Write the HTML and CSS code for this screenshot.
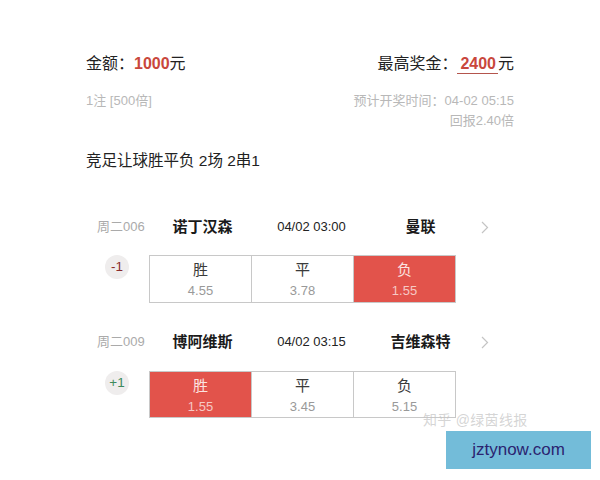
FILE: index.html
```html
<!DOCTYPE html>
<html lang="zh">
<head>
<meta charset="utf-8">
<link rel="stylesheet" href="styles.css">
</head>
<body>
<div class="page">
  <div class="summary">
    <div class="amount">金额：<span class="money">1000</span>元</div>
    <div class="amount">最高奖金：<span class="money prize">2400</span>元</div>
  </div>
  <div class="meta">
    <div class="meta-left">1注 [500倍]</div>
    <div class="meta-right">
      <div>预计开奖时间：04-02 05:15</div>
      <div>回报2.40倍</div>
    </div>
  </div>
  <div class="title">竞足让球胜平负 2场 2串1</div>

  <div class="match first">
    <div class="match-head">
      <span class="week">周二006</span>
      <span class="team">诺丁汉森</span>
      <span class="time">04/02 03:00</span>
      <span class="team">曼联</span>
      <svg class="chev" width="8" height="13" viewBox="0 0 8 13"><polyline points="1,1 6.5,6.5 1,12" fill="none" stroke="#c4c4c4" stroke-width="1.2"/></svg>
    </div>
    <div class="match-body">
      <span class="badge minus">-1</span>
      <div class="odds">
        <div class="cell"><span class="lab">胜</span><span class="val">4.55</span></div>
        <div class="cell"><span class="lab">平</span><span class="val">3.78</span></div>
        <div class="cell on"><span class="lab">负</span><span class="val">1.55</span></div>
      </div>
    </div>
  </div>

  <div class="match second">
    <div class="match-head">
      <span class="week">周二009</span>
      <span class="team">博阿维斯</span>
      <span class="time">04/02 03:15</span>
      <span class="team">吉维森特</span>
      <svg class="chev" width="8" height="13" viewBox="0 0 8 13"><polyline points="1,1 6.5,6.5 1,12" fill="none" stroke="#c4c4c4" stroke-width="1.2"/></svg>
    </div>
    <div class="match-body">
      <span class="badge plus">+1</span>
      <div class="odds">
        <div class="cell on"><span class="lab">胜</span><span class="val">1.55</span></div>
        <div class="cell"><span class="lab">平</span><span class="val">3.45</span></div>
        <div class="cell"><span class="lab">负</span><span class="val">5.15</span></div>
      </div>
    </div>
  </div>
</div>
<div class="watermark">知乎 @绿茵线报</div>
<div class="site">jztynow.com</div>
</body>
</html>
```

FILE: styles.css
```css
html, body {
  margin: 0;
  padding: 0;
  background: #ffffff;
}
body {
  width: 600px;
  height: 480px;
  position: relative;
  overflow: hidden;
  font-family: "Liberation Sans", "Noto Sans CJK SC", sans-serif;
  color: #222;
}
.page {
  padding: 54px 86px 0 86px;
}
.summary {
  display: flex;
  justify-content: space-between;
  font-size: 16px;
  line-height: 20px;
}
.money {
  color: #c9473c;
  font-weight: bold;
}
.prize {
  display: inline-block;
  line-height: 18px;
  padding: 0 2px 0 3px;
  border-bottom: 1.5px solid #b4554d;
}
.meta {
  display: flex;
  justify-content: space-between;
  margin-top: 17px;
  font-size: 13px;
  line-height: 20px;
  color: #b8b8b8;
}
.meta-right {
  text-align: right;
}
.title {
  margin-top: 20px;
  font-size: 15.5px;
  line-height: 20px;
  color: #222;
}
.match.first {
  margin-top: 46px;
}
.match.second {
  margin-top: 29px;
}
.match-head {
  display: flex;
  align-items: center;
  height: 20px;
  line-height: 20px;
}
.week {
  width: 51px;
  margin-left: 11px;
  font-size: 13px;
  color: #aaa;
}
.team {
  width: 109px;
  text-align: center;
  font-size: 15px;
  font-weight: bold;
  color: #1a1a1a;
}
.time {
  width: 109px;
  text-align: center;
  font-size: 13px;
  color: #222;
}
.chev {
  margin-left: 6px;
}
.match-body {
  display: flex;
  align-items: flex-start;
  margin-top: 18px;
  padding-left: 19px;
}
.second .match-body {
  margin-top: 19px;
}
.badge {
  width: 24px;
  height: 24px;
  margin-top: 0;
  border-radius: 50%;
  background: #efeded;
  font-size: 13.5px;
  line-height: 24px;
  text-align: center;
}
.badge.minus { color: #8a2d2d; }
.badge.plus { color: #3d8a5c; }
.odds {
  display: flex;
  margin-left: 20px;
  width: 305px;
  border: 1px solid #c8c8c8;
}
.second .odds {
  height: 45px;
}
.cell {
  flex: 1;
  display: flex;
  flex-direction: column;
  align-items: center;
  height: 46px;
  border-left: 1px solid #c8c8c8;
}
.second .cell {
  height: 45px;
}
.cell:first-child {
  border-left: none;
}
.lab {
  margin-top: 4px;
  font-size: 15px;
  line-height: 20px;
  color: #3a3a3a;
}
.val {
  margin-top: 3px;
  font-size: 13px;
  line-height: 16px;
  color: #999;
}
.cell.on {
  background: #e2534b;
}
.cell.on .lab {
  color: #fbe3e0;
}
.cell.on .val {
  color: #f6c9c4;
}
.watermark {
  position: absolute;
  left: 423px;
  top: 411px;
  font-size: 14px;
  line-height: 18px;
  color: rgba(195, 195, 195, 0.7);
  letter-spacing: 0.3px;
}
.site {
  position: absolute;
  left: 446px;
  top: 431px;
  width: 145px;
  height: 38px;
  background: #73bcd9;
  color: #2b2470;
  font-size: 17px;
  line-height: 38px;
  text-align: center;
}
```
